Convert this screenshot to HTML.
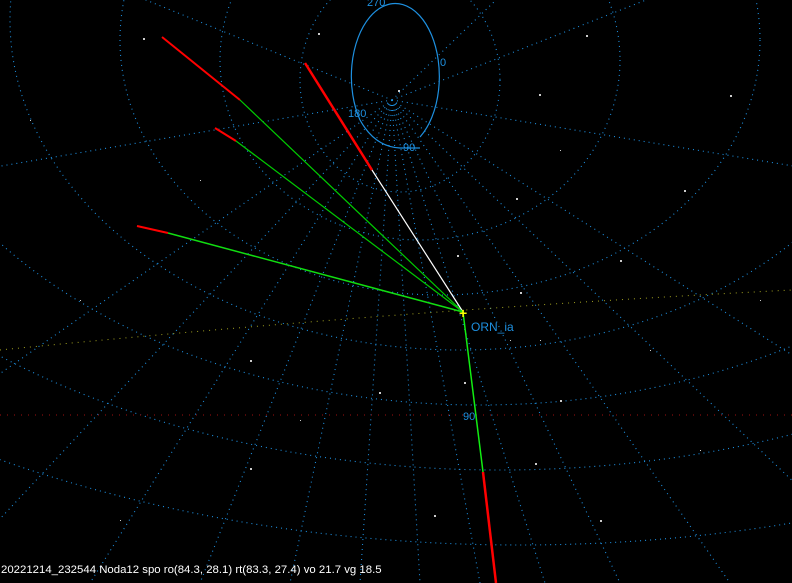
<!DOCTYPE html>
<html><head><style>
html,body{margin:0;padding:0;background:#000;width:792px;height:583px;overflow:hidden}
.t{position:absolute;left:1px;top:564px;color:#fff;font:11.4px "Liberation Sans",sans-serif;white-space:nowrap}
</style></head><body>
<svg width="792" height="583" style="position:absolute;left:0;top:0" xmlns="http://www.w3.org/2000/svg">
<g fill="none" stroke="#1e90e0" stroke-width="1.1" stroke-dasharray="1 4">
<ellipse cx="400" cy="80" rx="100" ry="112"/>
<ellipse cx="420" cy="60" rx="200" ry="180"/>
<ellipse cx="440" cy="40" rx="320" ry="255"/>
<ellipse cx="460" cy="20" rx="450" ry="330"/>
<ellipse cx="480" cy="0" rx="600" ry="405"/>
<ellipse cx="500" cy="-20" rx="780" ry="490"/>
<ellipse cx="520" cy="-40" rx="1000" ry="585"/>
<line x1="392" y1="100" x2="-300" y2="583"/>
<line x1="392" y1="100" x2="-60" y2="583"/>
<line x1="392" y1="100" x2="90" y2="583"/>
<line x1="392" y1="100" x2="200" y2="583"/>
<line x1="392" y1="100" x2="290" y2="583"/>
<line x1="392" y1="100" x2="360" y2="583"/>
<line x1="392" y1="100" x2="420" y2="583"/>
<line x1="392" y1="100" x2="480" y2="583"/>
<line x1="392" y1="100" x2="545" y2="583"/>
<line x1="392" y1="100" x2="620" y2="583"/>
<line x1="392" y1="100" x2="730" y2="583"/>
<line x1="392" y1="100" x2="900" y2="583"/>
<line x1="392" y1="100" x2="1150" y2="583"/>
<line x1="392" y1="100" x2="-200" y2="200"/>
<line x1="392" y1="100" x2="1000" y2="200"/>
<line x1="392" y1="100" x2="900" y2="-100"/>
<line x1="392" y1="100" x2="-100" y2="-100"/>
<line x1="392" y1="100" x2="600" y2="-100"/>
</g>
<g fill="none" stroke="#1e90e0" stroke-width="1.2">
<path d="M360 120 A44 73 0 1 1 420 137"/>
<path d="M360 120 Q375 147 400 148 L420 148"/>
</g>
<line x1="0" y1="415" x2="792" y2="415" stroke="#a01010" stroke-dasharray="1 6"/>
<path d="M0 350 Q400 310 792 290" fill="none" stroke="#a0a020" stroke-dasharray="1 5"/>
<g stroke-width="1.2">
<line x1="162" y1="37" x2="240" y2="100" stroke="#f00" stroke-width="2"/>
<line x1="240" y1="100" x2="463" y2="312" stroke="#0c0"/>
<line x1="305" y1="63" x2="372" y2="170" stroke="#f00" stroke-width="2.5"/>
<line x1="372" y1="170" x2="463" y2="312" stroke="#fff"/>
<line x1="215" y1="128" x2="236" y2="141" stroke="#f00" stroke-width="2"/>
<line x1="236" y1="141" x2="463" y2="312" stroke="#0c0"/>
<line x1="137" y1="226" x2="168" y2="233" stroke="#f00" stroke-width="2"/>
<line x1="168" y1="233" x2="463" y2="312" stroke="#1d1" stroke-width="1.5"/>
<line x1="463" y1="312" x2="483" y2="472" stroke="#1e1" stroke-width="1.5"/>
<line x1="483" y1="472" x2="496" y2="583" stroke="#f00" stroke-width="2.5"/>
</g>
<text x="459" y="318" fill="#ff0" font-size="14" font-weight="bold" font-family="Liberation Sans">+</text>
<g fill="#1e90e0" font-family="Liberation Sans" font-size="11">
<text x="367" y="6">270</text>
<text x="440" y="66">0</text>
<text x="348" y="117">180</text>
<text x="403" y="151">90</text>
<text x="463" y="420">90</text>
<text x="471" y="331" font-size="12">ORN_ia</text>
</g>
<g fill="#ccc">
<rect x="318" y="33" width="2" height="2"/><rect x="398" y="90" width="2" height="2"/><rect x="539" y="94" width="2" height="2"/>
<rect x="457" y="255" width="2" height="2"/><rect x="464" y="382" width="2" height="2"/><rect x="434" y="515" width="2" height="2"/>
<rect x="535" y="463" width="2" height="2"/><rect x="520" y="292" width="2" height="2"/><rect x="620" y="260" width="2" height="2"/>
<rect x="684" y="190" width="2" height="2"/><rect x="516" y="198" width="2" height="2"/><rect x="379" y="392" width="2" height="2"/>
<rect x="143" y="38" width="2" height="2"/><rect x="250" y="468" width="2" height="2"/><rect x="586" y="35" width="2" height="2"/>
<rect x="730" y="95" width="2" height="2"/><rect x="560" y="400" width="2" height="2"/><rect x="600" y="520" width="2" height="2"/>
<rect x="80" y="300" width="1" height="1"/><rect x="200" y="180" width="1" height="1"/><rect x="650" y="350" width="1" height="1"/>
<rect x="700" y="450" width="1" height="1"/><rect x="300" y="420" width="1" height="1"/><rect x="120" y="520" width="1" height="1"/>
<rect x="560" y="150" width="1" height="1"/><rect x="760" y="300" width="1" height="1"/><rect x="30" y="120" width="1" height="1"/>
<rect x="250" y="360" width="2" height="2"/><rect x="510" y="340" width="1" height="1"/><rect x="540" y="340" width="1" height="1"/>
</g>
</svg>
<div class="t">20221214_232544 Noda12 spo ro(84.3, 28.1) rt(83.3, 27.4) vo 21.7 vg 18.5</div>
</body></html>
